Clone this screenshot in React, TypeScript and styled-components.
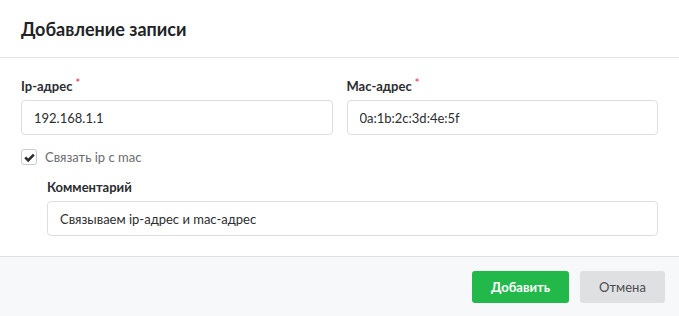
import React, { useState } from 'react';
import styled, { createGlobalStyle } from 'styled-components';

const GlobalStyle = createGlobalStyle`
  html, body {
    margin: 0;
    padding: 0;
    background: #ffffff;
    font-family: Lato, "Noto Sans", "Liberation Sans", sans-serif;
  }
`;

const Modal = styled.div`
  width: 679px;
  height: 316px;
  display: flex;
  flex-direction: column;
  background: #ffffff;
  box-sizing: border-box;
`;

const Header = styled.div`
  height: 57px;
  display: flex;
  align-items: center;
  padding: 0 21px;
  border-bottom: 1px solid #e3e4e6;
`;

const Title = styled.h2`
  margin: 0;
  font-size: 18px;
  font-weight: 700;
  color: #222426;
`;

const Body = styled.div`
  flex: 1;
  padding: 20px 21px 0;
  display: flex;
  flex-direction: column;
`;

const Row = styled.div`
  display: grid;
  grid-template-columns: 1fr 1fr;
  column-gap: 14px;
`;

const Field = styled.div<{ $indent?: boolean }>`
  display: flex;
  flex-direction: column;
  gap: 6px;
  margin-left: ${(p) => (p.$indent ? '26px' : '0')};
`;

const Label = styled.label`
  font-size: 13px;
  line-height: 16px;
  font-weight: 700;
  color: #2b2d30;
`;

const Required = styled.span`
  color: #e5566e;
  font-size: 11px;
  vertical-align: top;
  margin-left: 3px;
  position: relative;
  top: -3px;
`;

const Input = styled.input`
  height: 35px;
  box-sizing: border-box;
  border: 1px solid #dcdee2;
  border-radius: 4px;
  padding: 0 12px;
  font-family: inherit;
  font-size: 13px;
  color: #2b2d30;
  outline: none;
  width: 100%;
`;

const CheckRow = styled.label`
  display: flex;
  align-items: center;
  gap: 8px;
  margin: 14px 0;
  height: 16px;
  font-size: 13px;
  color: #6a6c70;
  cursor: pointer;
`;

const Box = styled.span`
  width: 16px;
  height: 16px;
  box-sizing: border-box;
  border: 1px solid #c9cbcf;
  border-radius: 3px;
  display: flex;
  align-items: center;
  justify-content: center;
  background: #fff;
`;

const Footer = styled.div`
  height: 59px;
  border-top: 1px solid #dcdee2;
  background: #f7f8fa;
  display: flex;
  align-items: center;
  justify-content: flex-end;
  gap: 11px;
  padding: 0 14px;
`;

const Button = styled.button<{ $primary?: boolean }>`
  height: 32px;
  border: none;
  border-radius: 3px;
  padding: 0;
  width: ${(p) => (p.$primary ? '97px' : '85px')};
  font-family: inherit;
  font-size: 13px;
  font-weight: ${(p) => (p.$primary ? 700 : 400)};
  background: ${(p) => (p.$primary ? '#22b94a' : '#dfe0e2')};
  color: ${(p) => (p.$primary ? '#ffffff' : '#4a4c50')};
  cursor: pointer;
`;

export default function App() {
  const [bind, setBind] = useState(true);
  return (
    <>
      <GlobalStyle />
      <Modal>
        <Header>
          <Title>Добавление записи</Title>
        </Header>
        <Body>
          <Row>
            <Field>
              <Label>
                Ip-адрес<Required>*</Required>
              </Label>
              <Input defaultValue="192.168.1.1" />
            </Field>
            <Field>
              <Label>
                Mac-адрес<Required>*</Required>
              </Label>
              <Input defaultValue="0a:1b:2c:3d:4e:5f" />
            </Field>
          </Row>
          <CheckRow onClick={() => setBind(!bind)}>
            <Box>
              {bind && (
                <svg width="11" height="9" viewBox="0 0 11 9">
                  <path d="M1.2 4.4 L4.2 7.4 L9.8 1.6" fill="none" stroke="#2b2d30" strokeWidth="2.6" />
                </svg>
              )}
            </Box>
            Связать ip с mac
          </CheckRow>
          <Field $indent>
            <Label>Комментарий</Label>
            <Input defaultValue="Связываем ip-адрес и mac-адрес" />
          </Field>
        </Body>
        <Footer>
          <Button $primary>Добавить</Button>
          <Button>Отмена</Button>
        </Footer>
      </Modal>
    </>
  );
}
